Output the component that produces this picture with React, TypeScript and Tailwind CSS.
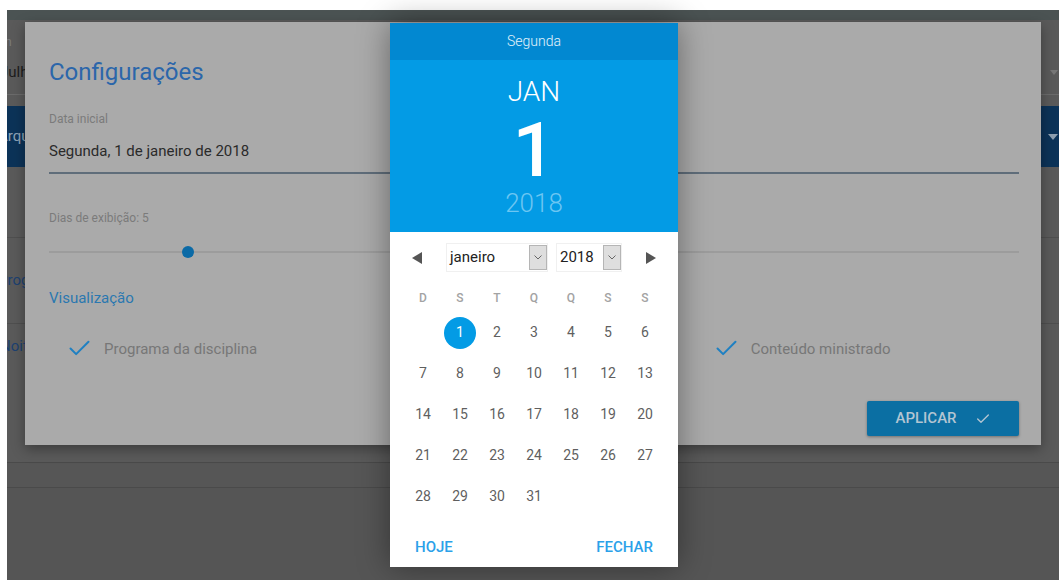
import { Check } from "lucide-react"

const weekDays = ["D", "S", "T", "Q", "Q", "S", "S"]

// January 2018 starts on a Monday
const weeks: (number | null)[][] = [
  [null, 1, 2, 3, 4, 5, 6],
  [7, 8, 9, 10, 11, 12, 13],
  [14, 15, 16, 17, 18, 19, 20],
  [21, 22, 23, 24, 25, 26, 27],
  [28, 29, 30, 31, null, null, null],
]

function Triangle({ dir }: { dir: "left" | "right" }) {
  return (
    <svg width="10" height="12" viewBox="0 0 10 12">
      {dir === "left" ? (
        <polygon points="10,0 10,12 0,6" fill="#555" />
      ) : (
        <polygon points="0,0 0,12 10,6" fill="#555" />
      )}
    </svg>
  )
}

function FakeSelect({ value, width }: { value: string; width: string }) {
  return (
    <div className={`flex h-[29px] ${width} items-stretch border border-[#f0f0f0] bg-white`}>
      <span className="flex flex-1 items-center pl-[3px] text-[15px] text-[#222]">{value}</span>
      <span className="my-px flex w-[18px] items-center justify-center border border-[#b5b5b5] bg-[#dedede]">
        <svg width="8" height="5" viewBox="0 0 8 5">
          <polyline points="0.5,0.5 4,4 7.5,0.5" fill="none" stroke="#666" strokeWidth="1" />
        </svg>
      </span>
    </div>
  )
}

function DatePicker() {
  return (
    <div className="absolute left-[390px] top-[23px] flex w-[288px] flex-col bg-white shadow-[0_0_30px_rgba(0,0,0,0.4)]">
      <div className="flex h-[37px] items-center justify-center bg-[#0288d1] text-[14px] font-light text-white/90">
        Segunda
      </div>
      <div className="flex h-[172px] flex-col items-center bg-[#039be5] pt-4 text-white">
        <div className="text-[28px] leading-8 font-light">JAN</div>
        <div className="mt-[7px] text-[76px] leading-[70px] font-medium">1</div>
        <div className="mt-[3px] text-[26px] leading-[30px] font-light text-[#6cc6f2]">2018</div>
      </div>
      <div className="flex flex-col pt-[11px] pb-[10px]">
        <div className="flex items-center justify-center">
          <Triangle dir="left" />
          <div className="ml-6 mr-2">
            <FakeSelect value="janeiro" width="w-[102px]" />
          </div>
          <div className="mr-6">
            <FakeSelect value="2018" width="w-[66px]" />
          </div>
          <Triangle dir="right" />
        </div>
        <div className="mx-auto mt-[18px] grid w-[259px] grid-cols-7">
          {weekDays.map((d, i) => (
            <div key={i} className="text-center text-[12px] leading-4 font-medium text-[#a3a3a3]">
              {d}
            </div>
          ))}
        </div>
        <div className="mx-auto mt-[6px] flex w-[259px] flex-col">
          {weeks.map((week, wi) => (
            <div key={wi} className="grid h-[41px] grid-cols-7">
              {week.map((day, di) => (
                <div key={di} className="flex items-center justify-center">
                  {day === 1 ? (
                    <span className="flex h-8 w-8 items-center justify-center rounded-full bg-[#039be5] text-[14px] text-white">
                      1
                    </span>
                  ) : (
                    <span className="text-[14px] text-[#5f5f5f]">{day ?? ""}</span>
                  )}
                </div>
              ))}
            </div>
          ))}
        </div>
        <div className="mt-5 flex justify-between px-[25px] text-[15px] leading-5 font-medium text-[#2ba1e9]">
          <span>HOJE</span>
          <span>FECHAR</span>
        </div>
      </div>
    </div>
  )
}

function CheckItem({ label }: { label: string }) {
  return (
    <div className="flex items-center pl-[17px]">
      <Check className="h-[27px] w-[27px] text-[#1f80c2]" strokeWidth={1.8} />
      <span className="ml-[11px] text-[15px] leading-5 text-[#777]">{label}</span>
    </div>
  )
}

function SettingsModal() {
  return (
    <div className="absolute left-[25px] top-[22px] flex w-[1016px] flex-col bg-[#aaaaaa] px-6 pt-[34px] pb-[9px] shadow-[0_4px_12px_rgba(0,0,0,0.35)]">
      <h2 className="text-[24px] leading-8 text-[#2b66aa]">Configurações</h2>
      <div className="mt-[23px] text-[12px] leading-4 text-[#7b7b7b]">Data inicial</div>
      <div className="mt-[14px] text-[15px] leading-5 text-[#2a2a2a]">Segunda, 1 de janeiro de 2018</div>
      <div className="mt-[11px] h-[2px] w-[970px] bg-[#5f6d7a]" />
      <div className="mt-9 text-[12px] leading-4 text-[#7b7b7b]">Dias de exibição: 5</div>
      <div className="relative mt-5 flex h-3 w-[970px] items-center">
        <div className="h-[2px] w-full bg-[#9c9c9c]" />
        <div className="absolute left-[133px] top-0 h-3 w-3 rounded-full bg-[#0b6aa6]" />
      </div>
      <div className="mt-[30px] text-[15px] leading-5 text-[#2a78b0]">Visualização</div>
      <div className="mt-[27px] grid w-[970px] grid-cols-3">
        <CheckItem label="Programa da disciplina" />
        <CheckItem label="Plano de ensino" />
        <CheckItem label="Conteúdo ministrado" />
      </div>
      <div className="mt-[39px] flex w-[970px] justify-end">
        <button className="flex h-[35px] w-[152px] items-center justify-center gap-[18px] rounded-[2px] bg-[#0b6fa3] text-[15px] font-medium text-[#b3c5d2] shadow-[0_1px_3px_rgba(0,0,0,0.35)]">
          APLICAR
          <Check className="h-4 w-4" strokeWidth={2} />
        </button>
      </div>
    </div>
  )
}

// dimmed page sitting behind the dialogs
function BackgroundPage() {
  return (
    <div className="flex h-full flex-col overflow-hidden bg-[#5a5a5a]">
      <div className="h-[10px] bg-[#4b5353]" />
      <div className="flex h-[74px] flex-col justify-between pt-[14px] pb-[12px]">
        <div className="flex justify-between">
          <span className="-ml-[2px] text-[12px] leading-4 text-[#7c7c7c]">n</span>
        </div>
        <div className="flex items-center justify-between">
          <span className="-ml-[7px] text-[15px] leading-5 text-[#1d1d1d]">Julho</span>
          <svg width="8" height="5" viewBox="0 0 8 5" className="mr-[1px]">
            <polygon points="0,0 8,0 4,5" fill="#777" />
          </svg>
        </div>
      </div>
      <div className="h-px bg-[#6b6b6b]" />
      <div className="mt-[11px] flex h-[61px] items-center justify-between bg-[#0c3358]">
        <span className="-ml-[9px] text-[15px] text-[#8ea3b6]">Arquivo</span>
        <svg width="10" height="6" viewBox="0 0 10 6" className="mr-[1px]">
          <polygon points="0,0 10,0 5,6" fill="#8fa0b0" />
        </svg>
      </div>
      <div className="h-[70px]" />
      <div className="h-px bg-[#4f4f4f]" />
      <div className="flex h-[85px] items-center">
        <span className="-ml-[9px] text-[15px] text-[#1d4170]">Programa</span>
      </div>
      <div className="h-px bg-[#4f4f4f]" />
      <div className="flex h-[44px] items-center">
        <span className="-ml-[7px] text-[15px] text-[#1d4170]">Noite</span>
      </div>
      <div className="h-[94px]" />
      <div className="h-px bg-[#4a4a4a]" />
      <div className="h-[24px] bg-[#565656]" />
      <div className="h-px bg-[#4a4a4a]" />
      <div className="flex-1 bg-[#555555]" />
    </div>
  )
}

export default function App() {
  return (
    <div className="relative h-[580px] w-[1059px] overflow-hidden bg-white font-['Roboto',sans-serif]">
      <div className="h-full pt-[10px] pl-[7px]">
        <BackgroundPage />
      </div>
      <SettingsModal />
      <DatePicker />
    </div>
  )
}
